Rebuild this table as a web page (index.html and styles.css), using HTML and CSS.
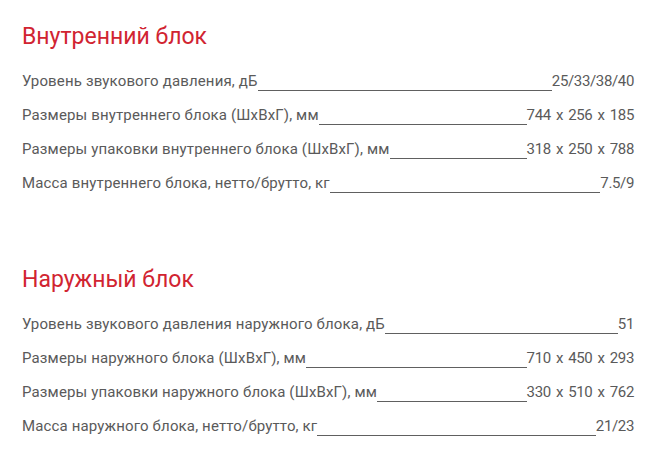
FILE: index.html
```html
<!DOCTYPE html>
<html lang="ru">
<head>
<meta charset="utf-8">
<link rel="stylesheet" href="styles.css">
</head>
<body>
<div class="specs">
  <section class="block">
    <h2 class="block-title">Внутренний блок</h2>
    <ul class="rows">
      <li class="row"><span class="label">Уровень звукового давления, дБ</span><span class="fill"></span><span class="value">25/33/38/40</span></li>
      <li class="row"><span class="label">Размеры внутреннего блока (ШxВxГ), мм</span><span class="fill"></span><span class="value">744 x 256 x 185</span></li>
      <li class="row"><span class="label">Размеры упаковки внутреннего блока (ШxВxГ), мм</span><span class="fill"></span><span class="value">318 x 250 x 788</span></li>
      <li class="row"><span class="label">Масса внутреннего блока, нетто/брутто, кг</span><span class="fill"></span><span class="value">7.5/9</span></li>
    </ul>
  </section>
  <section class="block">
    <h2 class="block-title">Наружный блок</h2>
    <ul class="rows">
      <li class="row"><span class="label">Уровень звукового давления наружного блока, дБ</span><span class="fill"></span><span class="value">51</span></li>
      <li class="row"><span class="label">Размеры наружного блока (ШxВxГ), мм</span><span class="fill"></span><span class="value">710 x 450 x 293</span></li>
      <li class="row"><span class="label">Размеры упаковки наружного блока (ШxВxГ), мм</span><span class="fill"></span><span class="value">330 x 510 x 762</span></li>
      <li class="row"><span class="label">Масса наружного блока, нетто/брутто, кг</span><span class="fill"></span><span class="value">21/23</span></li>
    </ul>
  </section>
</div>
</body>
</html>
```
FILE: styles.css
```css
html, body {
  margin: 0;
  padding: 0;
  background: #fff;
}
body {
  font-family: Roboto, "Liberation Sans", sans-serif;
  color: #5a5a5a;
}
.specs {
  width: 612px;
  padding: 24px 0 0 22px;
}
.block + .block {
  margin-top: 67px;
}
.block-title {
  margin: 0 0 14px;
  font-size: 23px;
  line-height: 26px;
  font-weight: 400;
  color: #d12431;
}
.rows {
  list-style: none;
  margin: 0;
  padding: 0;
}
.row {
  display: flex;
  align-items: flex-end;
  height: 34px;
  font-size: 15px;
  line-height: 34px;
  white-space: nowrap;
}
.label {
  letter-spacing: 0.15px;
}
.value {
  letter-spacing: -0.35px;
  word-spacing: 1.75px;
}
.fill {
  flex: 1;
  border-bottom: 1px solid #606060;
  margin-bottom: 7px;
}
```
